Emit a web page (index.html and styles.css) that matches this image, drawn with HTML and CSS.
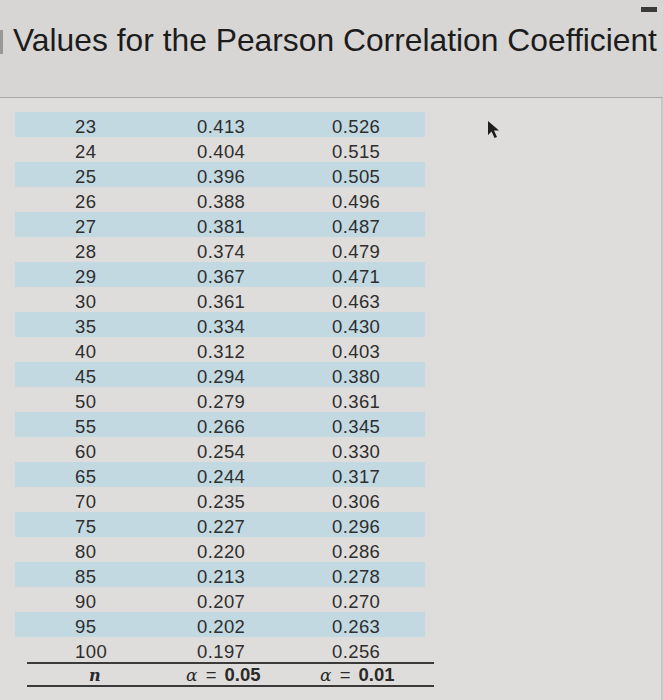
FILE: index.html
```html
<!DOCTYPE html>
<html>
<head>
<meta charset="utf-8">
<link rel="stylesheet" href="styles.css">
</head>
<body>
<div class="screen">
  <header class="titlebar">
    <span class="edge"></span>
    <h1 class="title">Values for the Pearson Correlation Coefficient</h1>
    <span class="dash"></span>
  </header>
  <section class="panel">
    <div class="table">
      <div class="row s"><span>23</span><span>0.413</span><span>0.526</span></div>
      <div class="row"><span>24</span><span>0.404</span><span>0.515</span></div>
      <div class="row s"><span>25</span><span>0.396</span><span>0.505</span></div>
      <div class="row"><span>26</span><span>0.388</span><span>0.496</span></div>
      <div class="row s"><span>27</span><span>0.381</span><span>0.487</span></div>
      <div class="row"><span>28</span><span>0.374</span><span>0.479</span></div>
      <div class="row s"><span>29</span><span>0.367</span><span>0.471</span></div>
      <div class="row"><span>30</span><span>0.361</span><span>0.463</span></div>
      <div class="row s"><span>35</span><span>0.334</span><span>0.430</span></div>
      <div class="row"><span>40</span><span>0.312</span><span>0.403</span></div>
      <div class="row s"><span>45</span><span>0.294</span><span>0.380</span></div>
      <div class="row"><span>50</span><span>0.279</span><span>0.361</span></div>
      <div class="row s"><span>55</span><span>0.266</span><span>0.345</span></div>
      <div class="row"><span>60</span><span>0.254</span><span>0.330</span></div>
      <div class="row s"><span>65</span><span>0.244</span><span>0.317</span></div>
      <div class="row"><span>70</span><span>0.235</span><span>0.306</span></div>
      <div class="row s"><span>75</span><span>0.227</span><span>0.296</span></div>
      <div class="row"><span>80</span><span>0.220</span><span>0.286</span></div>
      <div class="row s"><span>85</span><span>0.213</span><span>0.278</span></div>
      <div class="row"><span>90</span><span>0.207</span><span>0.270</span></div>
      <div class="row s"><span>95</span><span>0.202</span><span>0.263</span></div>
      <div class="row"><span>100</span><span>0.197</span><span>0.256</span></div>
      <div class="foot">
        <span class="n">n</span>
        <span class="a"><i>α</i> <span class="eq">=</span> 0.05</span>
        <span class="a"><i>α</i> <span class="eq">=</span> 0.01</span>
      </div>
    </div>
    <svg class="cursor" width="16" height="20" viewBox="0 0 16 20"><path d="M2 1 L2 15 L5.5 11.5 L8.5 18 L11 17 L8 10.5 L13 10.5 Z" fill="#1e1e1e"/></svg>
  </section>
</div>
</body>
</html>
```
FILE: styles.css
```css
html, body {
  margin: 0;
  padding: 0;
  background: #d9d7d6;
}
.screen {
  width: 663px;
  height: 700px;
  overflow: hidden;
  display: flex;
  flex-direction: column;
  font-family: "Liberation Sans", Arial, sans-serif;
  color: #2a2a2a;
}
.titlebar {
  position: relative;
  height: 97px;
  background: #d8d6d5;
}
.title {
  margin: 0;
  padding: 22px 0 0 13px;
  font-weight: 400;
  font-size: 31.8px;
  line-height: 36px;
  color: #1c1c1c;
  letter-spacing: 0;
  white-space: nowrap;
}
.edge {
  position: absolute;
  left: 0;
  top: 30px;
  width: 3px;
  height: 24px;
  background: #9a9897;
}
.dash {
  position: absolute;
  left: 641px;
  top: 7px;
  width: 16px;
  height: 5px;
  background: #3a3a3a;
}
.panel {
  position: relative;
  flex: 1;
  background: #dfdddb;
  border-top: 1px solid #a8a5a3;
  border-right: 2px solid #c8c6c4;
  padding-top: 14px;
}
.table {
  width: 420px;
  margin-left: 15px;
}
.row {
  display: grid;
  grid-template-columns: 60px 122px 135px 1fr;
  height: 25px;
  align-items: center;
  font-size: 18.5px;
  letter-spacing: 0.4px;
  color: #2e2e2e;
  width: 410px;
}
.row span:first-child { grid-column: 2; }
.row span { padding-top: 4px; }
.row.s { background: #c2d9e1; }
.foot {
  margin-left: 12px;
  width: 407px;
  border-top: 2px solid #3a3a3a;
  border-bottom: 2px solid #3a3a3a;
  height: 21px;
  display: grid;
  grid-template-columns: 62px 97px 134px 1fr;
  align-items: center;
  font-weight: 700;
  font-size: 18.5px;
  color: #2a2a2a;
}
.foot .n {
  grid-column: 2;
  font-family: "DejaVu Serif", "Liberation Serif", serif;
  font-style: italic;
  font-size: 16px;
}
.foot i {
  font-family: "DejaVu Serif", "Liberation Serif", serif;
  font-weight: 400;
  font-size: 17px;
}
.foot .eq {
  font-weight: 400;
  margin: 0 3px;
}
.cursor {
  position: absolute;
  left: 486px;
  top: 22px;
}
```
